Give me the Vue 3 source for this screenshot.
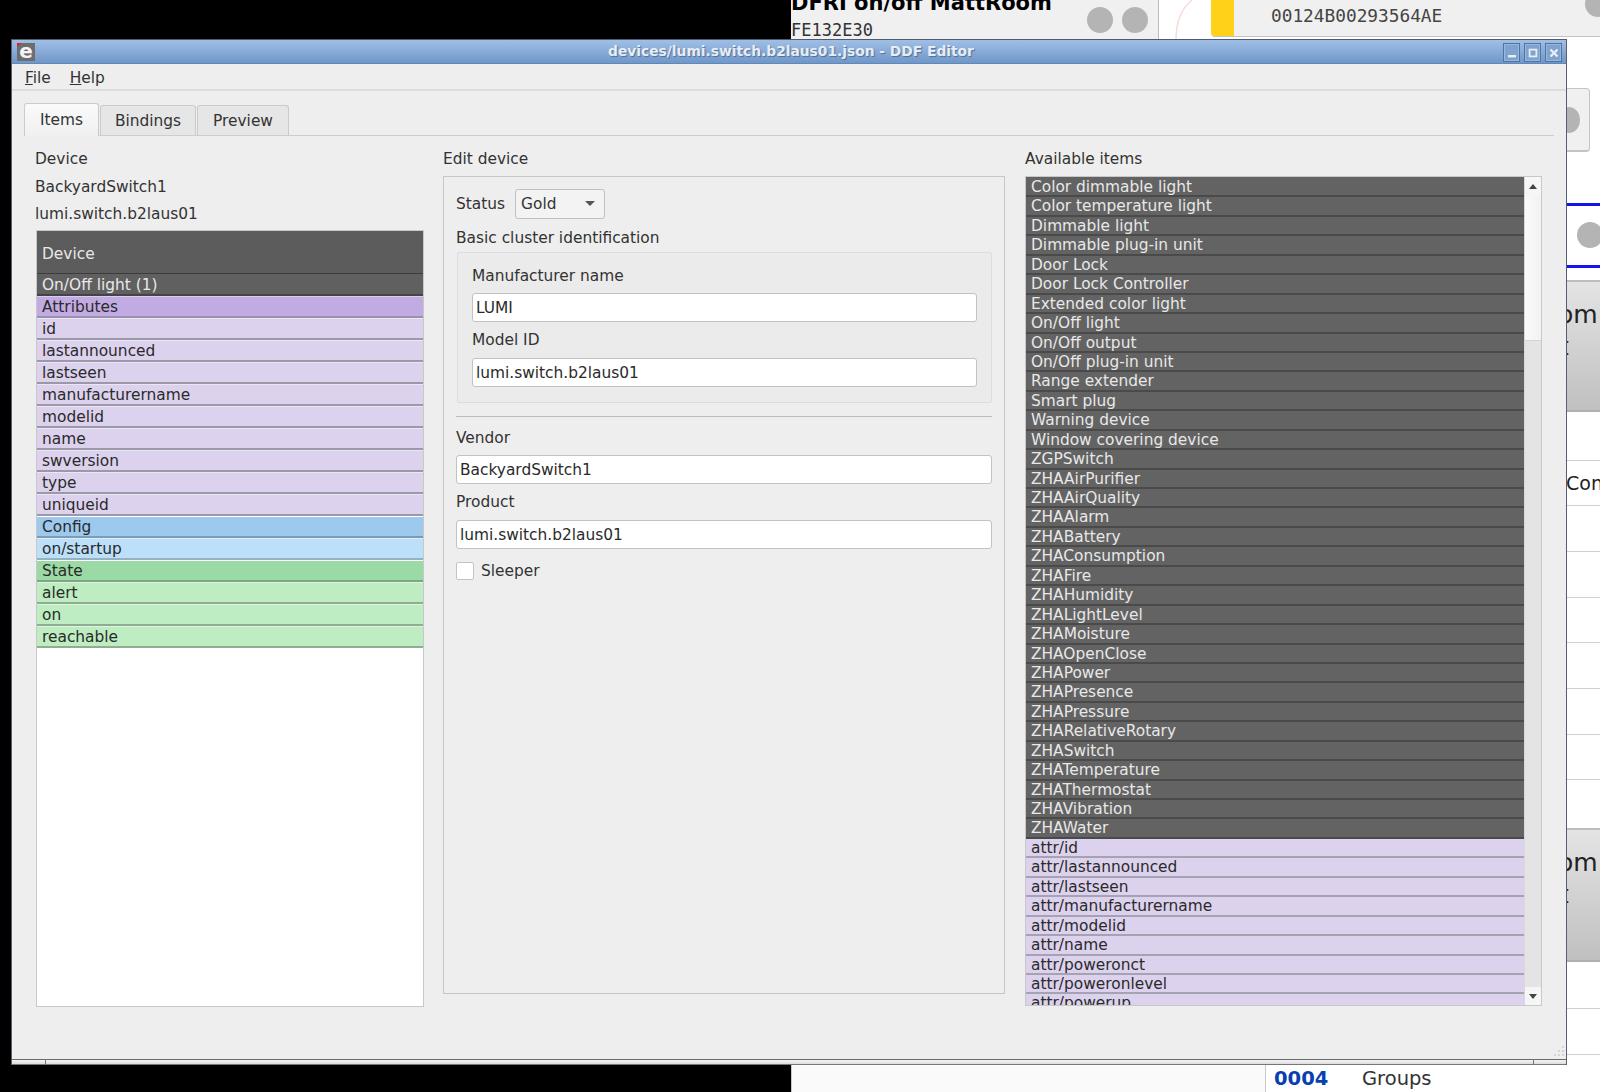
<script setup>
const treeRows = [
  ['dev', 'On/Off light (1)'],
  ['attrh', 'Attributes'],
  ['attr', 'id'], ['attr', 'lastannounced'], ['attr', 'lastseen'], ['attr', 'manufacturername'],
  ['attr', 'modelid'], ['attr', 'name'], ['attr', 'swversion'], ['attr', 'type'], ['attr', 'uniqueid'],
  ['confh', 'Config'], ['conf', 'on/startup'],
  ['stateh', 'State'], ['state', 'alert'], ['state', 'on'], ['state', 'reachable']
]
const devices = ['Color dimmable light','Color temperature light','Dimmable light','Dimmable plug-in unit','Door Lock','Door Lock Controller','Extended color light','On/Off light','On/Off output','On/Off plug-in unit','Range extender','Smart plug','Warning device','Window covering device','ZGPSwitch','ZHAAirPurifier','ZHAAirQuality','ZHAAlarm','ZHABattery','ZHAConsumption','ZHAFire','ZHAHumidity','ZHALightLevel','ZHAMoisture','ZHAOpenClose','ZHAPower','ZHAPresence','ZHAPressure','ZHARelativeRotary','ZHASwitch','ZHATemperature','ZHAThermostat','ZHAVibration','ZHAWater']
const attrs = ['attr/id','attr/lastannounced','attr/lastseen','attr/manufacturername','attr/modelid','attr/name','attr/poweronct','attr/poweronlevel','attr/powerup']
const ruleTops = [460, 505, 551, 597, 642, 688, 734, 779]
</script>

<template>
  <div class="desktop">
    <div class="back-top">
      <div class="back-head">
        <div class="back-name"><b>DFRI on/off MattRoom</b><span>FE132E30</span></div>
        <i class="dot d1"></i><i class="dot d2"></i>
      </div>
      <div class="back-graph">
        <svg class="arc" width="40" height="40" viewBox="0 0 40 40"><path d="M12 40 C12 20 18 8 28 0" fill="none" stroke="#f5dcd8" stroke-width="1.5"/></svg>
        <div class="back-card"><i class="yellow"></i><span>00124B00293564AE</span></div>
        <i class="dot d3"></i>
      </div>
    </div>

    <div class="strip">
      <div class="s-card"><i class="dot d4"></i></div>
      <div class="s-blue bl1"></div>
      <i class="dot d5"></i>
      <div class="s-blue bl2"></div>
      <div class="s-btn b1"><span class="om">om</span><span class="tt">t</span></div>
      <span class="con">Con</span>
      <i v-for="t in ruleTops" :key="t" class="rule" :style="{ top: t + 'px' }"></i>
      <div class="s-btn b2"><span class="om">om</span><span class="tt">t</span></div>
      <i class="rule" style="top:1008px"></i>
      <i class="rule" style="top:1054px"></i>
    </div>

    <div class="back-bottom">
      <div class="bb-left"></div>
      <div class="bb-right"><b>0004</b><span>Groups</span></div>
    </div>

    <div class="window">
      <header class="title">
        <span class="app-icon"><i></i>e</span>
        <span class="title-text">devices/lumi.switch.b2laus01.json - DDF Editor</span>
        <div class="win-btns">
          <button class="wb"><svg width="12" height="12" viewBox="0 0 12 12"><rect x="2" y="8" width="8" height="2.4" fill="#e8eef6"/></svg></button>
          <button class="wb"><svg width="12" height="12" viewBox="0 0 12 12"><rect x="2.6" y="2.6" width="6.8" height="6.8" fill="none" stroke="#e8eef6" stroke-width="1.8"/></svg></button>
          <button class="wb"><svg width="12" height="12" viewBox="0 0 12 12"><path d="M2.5 2.5 9.5 9.5M9.5 2.5 2.5 9.5" fill="none" stroke="#e8eef6" stroke-width="2.4"/></svg></button>
        </div>
      </header>

      <nav class="menu">
        <span><u>F</u>ile</span>
        <span><u>H</u>elp</span>
      </nav>

      <div class="tabs">
        <div class="tab active">Items</div>
        <div class="tab">Bindings</div>
        <div class="tab">Preview</div>
      </div>

      <main class="pane">
        <section class="col-left">
          <div class="lbl first">Device</div>
          <div class="lbl">BackyardSwitch1</div>
          <div class="lbl">lumi.switch.b2laus01</div>
          <div class="tree">
            <div class="tree-head">Device</div>
            <div v-for="r in treeRows" :key="r[1]" class="tree-row" :class="r[0]">{{ r[1] }}</div>
          </div>
        </section>

        <section class="col-mid">
          <div class="lbl first">Edit device</div>
          <div class="edit-box">
            <div class="status-row">
              <span>Status</span>
              <div class="combo"><span>Gold</span><i class="caret"></i></div>
            </div>
            <div class="cluster-title">Basic cluster identification</div>
            <div class="cluster">
              <div class="f-label f-first">Manufacturer name</div>
              <div class="input">LUMI</div>
              <div class="f-label">Model ID</div>
              <div class="input">lumi.switch.b2laus01</div>
            </div>
            <hr class="sep" />
            <div class="f-label f-vendor">Vendor</div>
            <div class="input">BackyardSwitch1</div>
            <div class="f-label">Product</div>
            <div class="input">lumi.switch.b2laus01</div>
            <label class="check"><i></i><span>Sleeper</span></label>
          </div>
        </section>

        <section class="col-right">
          <div class="lbl first">Available items</div>
          <div class="list">
            <div class="list-rows">
              <div v-for="d in devices" :key="d" class="li dark">{{ d }}</div>
              <div v-for="a in attrs" :key="a" class="li lav">{{ a }}</div>
            </div>
            <div class="scroll">
              <div class="sb-btn"><i class="up"></i></div>
              <div class="thumb"></div>
              <div class="track"></div>
              <div class="sb-btn"><i class="down"></i></div>
            </div>
          </div>
        </section>
      </main>

      <footer class="foot">
        <i class="notch n1"></i><i class="notch n2"></i>
        <svg class="grip" width="14" height="14" viewBox="0 0 14 14" fill="#d4d4d4">
          <rect x="11" y="1" width="2" height="2"/><rect x="7" y="5" width="2" height="2"/><rect x="11" y="5" width="2" height="2"/>
          <rect x="3" y="9" width="2" height="2"/><rect x="7" y="9" width="2" height="2"/><rect x="11" y="9" width="2" height="2"/>
        </svg>
      </footer>
    </div>
  </div>
</template>

<style>
html, body { margin: 0; padding: 0; background: #000; }
</style>

<style scoped>
.desktop { position: relative; width: 1600px; height: 1092px; overflow: hidden; background: #000; font-family: "DejaVu Sans", sans-serif; font-size: 15.4px; color: #2a2a2a; }

/* windows behind */
.back-top { position: absolute; left: 791px; top: 0; right: 0; height: 39px; display: flex; background: #fff; }
.back-head { position: relative; width: 367px; background: #f0f0f0; border-right: 1px solid #bdbdbd; }
.back-name { display: flex; flex-direction: column; margin-top: -8px; white-space: nowrap; }
.back-name b { font-size: 21px; color: #000; line-height: 22px; font-family: "DejaVu Sans", sans-serif; }
.back-name span { font-family: "DejaVu Sans Mono", monospace; font-size: 17px; line-height: 20px; margin-top: 6px; color: #333; }
.back-graph { position: relative; flex: 1; overflow: hidden; }
.arc { position: absolute; left: 5px; top: 0; }
.back-card { position: absolute; left: 52px; top: 0; right: 0; height: 36px; display: flex; align-items: center; background: #f0f0f0; border-bottom: 1px solid #c4c4c4; border-bottom-left-radius: 4px; }
.yellow { width: 23px; height: 100%; background: #ffd118; border-bottom-left-radius: 4px; }
.back-card span { margin-left: 37px; margin-top: -6px; font-family: "DejaVu Sans Mono", monospace; font-size: 17.8px; color: #444; }
.dot { position: absolute; display: block; border-radius: 50%; background: #b4b4b4; }
.d1 { left: 296px; top: 7px; width: 26px; height: 26px; }
.d2 { left: 331px; top: 7px; width: 26px; height: 26px; }
.d3 { left: 426px; top: -9px; width: 26px; height: 26px; }

.strip { position: absolute; left: 1567px; top: 39px; right: 0; bottom: 0; background: #fff; overflow: hidden; }
.s-card { position: absolute; left: -10px; top: 49px; width: 33px; height: 64px; box-sizing: border-box; background: #f0f0f0; border: 1px solid #c4c4c4; border-bottom-width: 2px; border-radius: 0 4px 4px 0; overflow: hidden; }
.d4 { left: 0; top: 18px; width: 22px; height: 26px; }
.s-blue { position: absolute; left: 0; right: 0; height: 3px; background: #1414f0; }
.bl1 { top: 164px; }
.bl2 { top: 226px; }
.d5 { left: 10px; top: 183px; width: 26px; height: 26px; }
.s-btn { position: absolute; left: 0; right: 0; overflow: hidden; background: linear-gradient(#e4e4e4, #c0c0c0); border-top: 2px solid #bdbdbd; border-bottom: 2px solid #b0b0b0; color: #222; }
.b1 { top: 241px; height: 128px; }
.b2 { top: 789px; height: 130px; }
.om { position: absolute; left: -9px; top: 18px; font-size: 25px; line-height: 30px; }
.tt { position: absolute; left: -8px; top: 50px; font-size: 25px; line-height: 30px; }
.con { position: absolute; left: -1px; top: 433px; font-size: 19px; line-height: 22px; color: #222; }
.rule { position: absolute; left: 0; right: 0; height: 1px; background: #d0d0d0; margin-top: -39px; }

.back-bottom { position: absolute; left: 791px; top: 1064px; right: 0; bottom: 0; display: flex; background: #fff; }
.bb-left { width: 475px; background: #fafafa; border-right: 1px solid #c8c8c8; border-left: 1px solid #c8c8c8; box-sizing: border-box; }
.bb-right { display: flex; align-items: center; padding-left: 8px; font-size: 19.5px; color: #333; }
.bb-right b { color: #0a3fb0; width: 88px; }

/* main window */
.window { position: absolute; left: 11px; top: 39px; width: 1556px; height: 1026px; box-sizing: border-box; display: flex; flex-direction: column; background: #eeeeee; border: 1px solid #55606e; border-top-color: #4e5b6c; border-bottom: 0; }
.title { position: relative; flex: none; height: 24px; display: flex; align-items: center; justify-content: center; background: linear-gradient(#a0bfe5, #7097c8); border-bottom: 1px solid #6088b8; box-sizing: border-box; padding-bottom: 2px; }
.title-text { font-size: 13.8px; font-weight: bold; color: #e6edf5; text-shadow: 1px 1px 1px #4c6f9c; margin-left: 4px; }
.app-icon { position: absolute; left: 5px; top: 3px; width: 18px; height: 18px; background: #6d6d6d; color: #f4f4f4; font: bold 20px/16px "DejaVu Sans", sans-serif; text-align: center; overflow: hidden; }
.app-icon i { position: absolute; left: 0; top: 0; border: 2px solid transparent; border-left-color: #e02020; border-top-color: #e02020; }
.win-btns { position: absolute; right: 4px; top: 3px; display: flex; gap: 4px; }
.wb { width: 17px; height: 19px; padding: 0; display: flex; align-items: center; justify-content: center; background: #7fa3cf; border: 1px solid #4f74a3; box-shadow: inset 0 0 0 1px #97b7dd; }

.menu { flex: none; display: flex; align-items: center; gap: 19px; padding: 3px 0 0 13px; box-sizing: content-box; height: 22px; border-bottom: 2px solid #dcdcdc; color: #333; }
.tabs { flex: none; display: flex; align-items: flex-end; height: 45px; margin: 0 12px; border-bottom: 1px solid #cdcdcd; box-sizing: border-box; }
.tab { box-sizing: border-box; height: 30px; width: 96px; display: flex; align-items: center; justify-content: center; background: #e6e6e6; border: 1px solid #cbcbcb; border-bottom: 0; border-radius: 3px 3px 0 0; margin-left: 1px; color: #333; }
.tab:nth-child(3) { width: 92px; }
.tab.active { width: 75px; height: 33px; margin: 0 0 -1px 0; background: linear-gradient(#fafafa, #f0f0f0); padding-bottom: 1px; }

.pane { flex: none; height: 876px; display: flex; padding: 0 0 0 24px; }
.lbl { height: 27px; line-height: 27px; color: #333; white-space: nowrap; }
.lbl.first { margin-top: 10px; height: 28px; line-height: 27px; }

.col-left { width: 388px; margin-right: 19px; flex: none; display: flex; flex-direction: column; }
.col-left .lbl { margin-left: -1px; }
.tree { box-sizing: border-box; height: 777px; margin-top: 2px; background: #fff; border: 1px solid #c8c8c8; }
.tree-head { height: 42px; line-height: 46px; padding-left: 5px; background: #5c5c5c; color: #e8e8e8; border-bottom: 1px solid #3c3c3c; box-sizing: content-box; }
.tree-row { box-sizing: border-box; height: 22px; line-height: 21px; padding-left: 5px; border-bottom: 2px solid #9b98a8; border-top: 1px solid transparent; background-clip: padding-box; color: #2a2a2a; }
.dev { background: #606060; color: #e8e8e8; border-bottom-color: #444; height: 21.5px; }
.attrh { background-color: #c2aae3; border-top-color: #d8cdea; border-bottom-color: #9b90ae; }
.attr { background-color: #dcd2ed; border-top-color: #ebe6f4; }
.confh { background-color: #9dc9ee; border-bottom-color: #7c9cb6; }
.conf { background-color: #bcdffa; border-top-color: #dcedfb; border-bottom-color: #96b0c4; }
.stateh { background-color: #9cdaa5; border-bottom-color: #7ea686; }
.state { background-color: #bdedc1; border-top-color: #dcf6de; border-bottom-color: #90ad93; }

.col-mid { width: 562px; margin-right: 20px; flex: none; display: flex; flex-direction: column; }
.edit-box { box-sizing: border-box; height: 818px; margin-top: 2px; border: 1px solid #c6c6c6; padding: 12px 12px 0 12px; display: flex; flex-direction: column; }
.status-row { display: flex; align-items: center; gap: 10px; height: 29px; color: #333; }
.combo { box-sizing: border-box; width: 90px; height: 30px; display: flex; align-items: center; justify-content: space-between; padding: 0 9px 0 5px; background: #f3f3f3; border: 1px solid #c0c0c0; border-radius: 3px; }
.caret { border: 5px solid transparent; border-top: 5px solid #555; border-bottom: 0; width: 0; height: 0; }
.cluster-title { margin-top: 9px; height: 25px; line-height: 22px; color: #333; }
.cluster { box-sizing: border-box; height: 151px; margin-left: 1px; padding: 0 14px; background: #ebebeb; border: 1px solid #dddddd; border-radius: 2px; }
.f-label { height: 36px; line-height: 37px; color: #333; }
.f-first { height: 40px; line-height: 46px; }
.f-vendor { height: 38px; line-height: 43px; }
.input { box-sizing: border-box; height: 29px; line-height: 29px; padding-left: 3px; background: #fff; border: 1px solid #c2c2c2; border-radius: 3px; color: #2a2a2a; }
.sep { width: 100%; height: 1px; margin: 13px 0 0; border: 0; background: #bcbcbc; flex: none; }
.check { display: flex; align-items: center; gap: 7px; margin-top: 13px; color: #333; }
.check i { box-sizing: border-box; width: 18px; height: 18px; background: #fff; border: 1px solid #c4c4c4; border-radius: 2px; }

.col-right { flex: none; width: 517px; display: flex; flex-direction: column; }
.list { position: relative; box-sizing: border-box; height: 830px; margin-top: 2px; display: flex; background: #e4e4e4; border: 1px solid #c8c8c8; overflow: hidden; }
.list-rows { width: 498px; flex: none; overflow: hidden; padding-top: 1px; background: #636363; }
.li { box-sizing: border-box; height: 19.44px; line-height: 19px; padding-left: 5px; white-space: nowrap; overflow: hidden; }
.dark { background: #636363; color: #e8e8e8; border-bottom: 2px solid #4a4a4a; }
.lav { background: #dcd2ed; color: #2a2a2a; border-bottom: 2px solid #a5a2b2; }
.scroll { flex: 1; display: flex; flex-direction: column; border-left: 1px solid #d8d8d8; }
.sb-btn { flex: none; height: 18px; background: #f6f6f6; display: flex; align-items: center; justify-content: center; }
.up { border: 4.5px solid transparent; border-bottom: 5px solid #444; border-top: 0; width: 0; height: 0; }
.down { border: 4.5px solid transparent; border-top: 5px solid #444; border-bottom: 0; width: 0; height: 0; }
.thumb { flex: none; height: 146px; background: linear-gradient(90deg, #fafafa, #f2f2f2); border-bottom: 1px solid #d4d4d4; box-sizing: border-box; }
.track { flex: 1; background: #e4e4e4; }

.foot { position: relative; flex: 1; min-height: 0; }
.foot::after { content: ""; position: absolute; left: 0; right: 0; bottom: 0; height: 6px; background: linear-gradient(#f4f4f4, #dcdcdc); border-top: 1px solid #6a6a6a; border-bottom: 1px solid #777; box-sizing: border-box; }
.notch { position: absolute; bottom: 0; width: 1px; height: 6px; background: #777; z-index: 1; }
.n1 { left: 33px; }
.n2 { right: 32px; }
.grip { position: absolute; right: 1px; bottom: 6px; }
</style>
